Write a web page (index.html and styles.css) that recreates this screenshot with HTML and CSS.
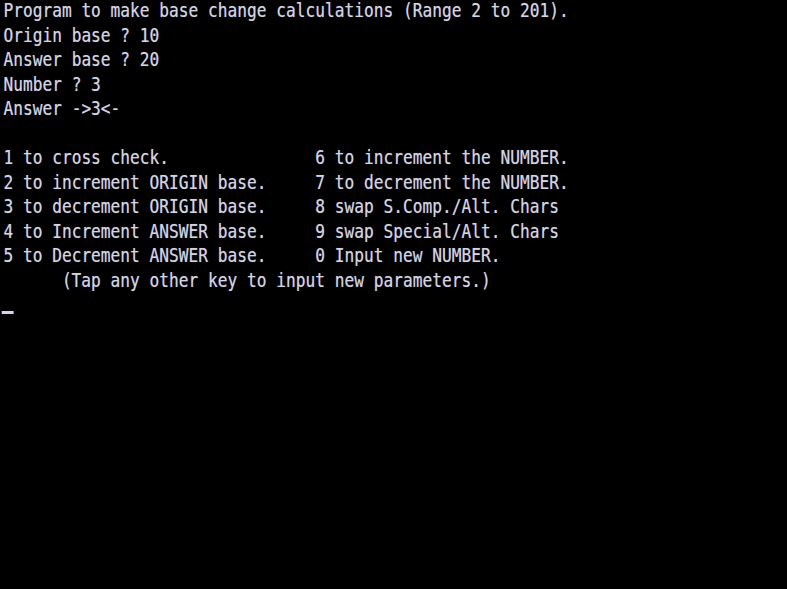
FILE: index.html
```html
<!DOCTYPE html>
<html>
<head>
<meta charset="utf-8">
<link rel="stylesheet" href="styles.css">
</head>
<body>
<div class="crt">
  <div class="screen">
    <div class="line">Program to make base change calculations (Range 2 to 201).</div>
    <div class="line">Origin base ? 10</div>
    <div class="line">Answer base ? 20</div>
    <div class="line">Number ? 3</div>
    <div class="line">Answer -&gt;3&lt;-</div>
    <div class="line"></div>
    <div class="menu">
      <div class="line">1 to cross check.</div><div class="line">6 to increment the NUMBER.</div>
      <div class="line">2 to increment ORIGIN base.</div><div class="line">7 to decrement the NUMBER.</div>
      <div class="line">3 to decrement ORIGIN base.</div><div class="line">8 swap S.Comp./Alt. Chars</div>
      <div class="line">4 to Increment ANSWER base.</div><div class="line">9 swap Special/Alt. Chars</div>
      <div class="line">5 to Decrement ANSWER base.</div><div class="line">0 Input new NUMBER.</div>
    </div>
    <div class="line indent">(Tap any other key to input new parameters.)</div>
    <div class="line"><span class="cursor"></span></div>
  </div>
</div>
</body>
</html>
```
FILE: styles.css
```css
html, body {
  margin: 0;
  padding: 0;
  background: #000;
}
.crt {
  width: 787px;
  height: 589px;
  overflow: hidden;
  background: #000;
}
.screen {
  width: 924px;
  margin-top: -2px;
  padding-left: 4px;
  font-family: "DejaVu Sans Mono", "Liberation Mono", monospace;
  font-size: 19px;
  line-height: 24.54px;
  color: #d4d4e6;
  text-shadow: 0 0 1px rgba(212, 212, 230, 0.5);
  transform: scaleX(0.852);
  transform-origin: 0 0;
}
.line {
  white-space: pre;
  height: 24.54px;
}
.menu {
  display: grid;
  grid-template-columns: 32ch 1fr;
}
.indent {
  padding-left: 6ch;
}
.cursor {
  display: inline-block;
  width: 1.2ch;
  height: 3px;
  background: #d4d4e6;
  vertical-align: -3px;
  margin-left: -2px;
}
```
